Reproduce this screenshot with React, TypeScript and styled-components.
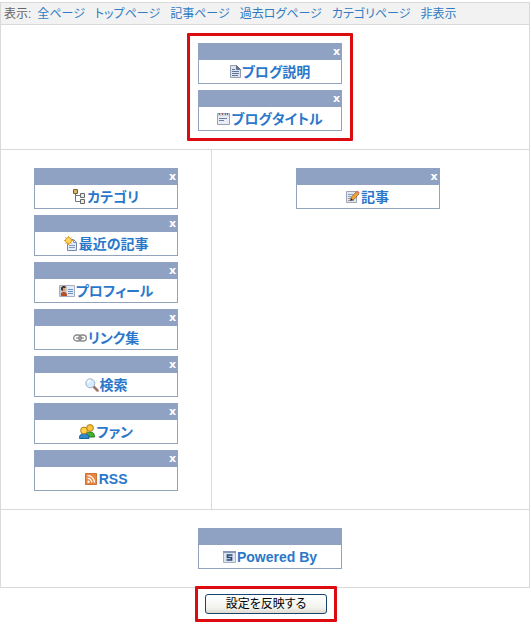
import React from "react";
import styled, { createGlobalStyle } from "styled-components";

const GlobalStyle = createGlobalStyle`
  body {
    margin: 0;
    background: #fff;
    font-family: "Liberation Sans", "Noto Sans CJK JP", sans-serif;
    font-feature-settings: "palt";
    color: #666;
  }
`;

const Page = styled.main`
  padding: 2px 1px 0 0;
`;

const Board = styled.div`
  border: 1px solid #d9d9d9;
`;

const Toolbar = styled.nav`
  display: flex;
  height: 21px;
  padding-left: 3px;
  align-items: center;
  gap: 10px;
  background: #f2f2f2;
  border-bottom: 1px solid #d9d9d9;
  font-size: 12px;
  line-height: 18px;
  white-space: nowrap;
`;

const ToolbarLabel = styled.span`
  margin-right: -4px;
`;

const ToolbarLink = styled.a`
  color: #2f7cc4;
  text-decoration: none;
`;

const HeaderArea = styled.section`
  display: flex;
  justify-content: center;
  padding: 8px 0 8px 10px;
  border-bottom: 1px solid #d9d9d9;
`;

const Columns = styled.div`
  display: grid;
  grid-template-columns: 2fr 3fr;
  border-bottom: 1px solid #d9d9d9;
`;

const Column = styled.section<{ $divided?: boolean }>`
  display: flex;
  flex-direction: column;
  align-items: center;
  gap: 6px;
  padding: ${(p) => (p.$divided ? "18px 0" : "18px 6px 18px 0")};
  border-right: ${(p) => (p.$divided ? "1px solid #d9d9d9" : "0")};
`;

const FooterArea = styled.section`
  display: flex;
  justify-content: center;
  padding: 18px 0 18px 10px;
`;

const Highlight = styled.div<{ $pad: string }>`
  display: flex;
  flex-direction: column;
  gap: 6px;
  padding: ${(p) => p.$pad};
  border: 3px solid #db0b10;
  border-radius: 1px;
`;

const Part = styled.article`
  box-sizing: border-box;
  width: 144px;
  border: 1px solid #92a3bc;
  border-top: 0;
  background: #fff;
`;

const PartBar = styled.header`
  display: flex;
  justify-content: flex-end;
  height: 17px;
  margin: 0 -1px;
  padding-right: 2px;
  background: #8fa2c4;
`;

const CloseButton = styled.button`
  padding: 0;
  border: 0;
  background: none;
  color: #fff;
  font: bold 11px/17px "DejaVu Sans", sans-serif;
  cursor: pointer;
`;

const PartBody = styled.a`
  display: flex;
  align-items: center;
  justify-content: center;
  height: 23px;
  color: #2b78cb;
  font-size: 14px;
  font-weight: bold;
  line-height: 22px;
  text-decoration: none;
  white-space: nowrap;
`;

const Icon = styled.svg`
  display: block;
  flex: none;
  margin-right: 1px;
`;

const SubmitRow = styled.div`
  display: flex;
  justify-content: center;
  margin-top: -2px;
  padding-left: 2px;
`;

const SubmitButton = styled.button`
  width: 122px;
  height: 20px;
  padding: 0;
  border: 1px solid #17436e;
  border-radius: 3px;
  background: linear-gradient(#fff, #f3f3ee 70%, #dedbd0);
  color: #000;
  font: 12px/16px "Liberation Sans", "Noto Sans CJK JP", sans-serif;
  font-feature-settings: "palt";
`;

const icons = {
  description: (
    <Icon width="11" height="13" viewBox="0 0 11 13" aria-hidden="true">
      <path d="M.5.5h6l4 4v8H.5z" fill="#dde3ec" stroke="#949eb0" />
      <path d="M6.5.5v4h4z" fill="#5f6f8c" stroke="#62718c" />
      <path d="M2 4.500h3M2 6.500h7M2 8.500h7M2 10.500h6" stroke="#62759b" />
    </Icon>
  ),
  title: (
    <Icon width="13" height="13" viewBox="0 0 13 13" aria-hidden="true">
      <path d="M.5 1.500h12v11H.5z" fill="#e8ecf4" stroke="#98a2b5" />
      <path d="M1 2h11v2H1z" fill="#cbd3e2" />
      <path d="M2 2h1M5 2h1M8 2h1M10 2h1" stroke="#b25a53" strokeWidth="2" />
      <path d="M2 6.500h8M2 8.500h5" stroke="#6b7fa5" />
    </Icon>
  ),
  category: (
    <Icon width="13" height="15" viewBox="0 0 13 15" aria-hidden="true">
      <path d="M2.5 5v7.5H7M2.500 6.500H7" fill="none" stroke="#777" />
      <path d="M.5.5h4v4h-4z" fill="#d9b65d" stroke="#7d6226" />
      <path d="M7.5 4.500h4v4h-4zM7.500 10.500h4v4h-4z" fill="#e9e9e9" stroke="#686868" />
    </Icon>
  ),
  recent: (
    <Icon width="14" height="15" viewBox="0 0 14 15" aria-hidden="true">
      <path d="M3.500 3.500h6l3 3v8h-9z" fill="#e3ecf8" stroke="#7189ad" />
      <path d="M9.500 3.500v3h3M5 9.500h6M5 11.500h6" fill="none" stroke="#8099be" />
      <path d="M4.500 0v9M0 4.500h9M1.500 1.500l6 6M7.500 1.500l-6 6" stroke="#e6a22e" />
      <circle cx="4.500" cy="4.500" r="3" fill="#ffd75c" stroke="#dc972b" />
    </Icon>
  ),
  profile: (
    <Icon width="16" height="12" viewBox="0 0 16 12" aria-hidden="true">
      <path d="M.5.5h15v11H.5z" fill="#e3ebf7" stroke="#a3aec1" />
      <path d="M1 1h7v10H1z" fill="#c6ccd7" />
      <path d="M2 11V8l2-1h2l2 2v2z" fill="#b94e25" />
      <circle cx="4.500" cy="4.500" r="2" fill="#dba26f" />
      <path d="M2 5V2.500L4 1h2l1 2H4v3z" fill="#4c3429" />
      <path d="M9 4.500h5M9 6.500h5M9 8.500h5" stroke="#7192c1" />
    </Icon>
  ),
  links: (
    <Icon width="14" height="8" viewBox="0 0 14 8" aria-hidden="true">
      <rect x=".7" y="1" width="7.500" height="6" rx="3" fill="none" stroke="#888" strokeWidth="1.300" />
      <rect x="5.800" y="1" width="7.500" height="6" rx="3" fill="none" stroke="#888" strokeWidth="1.300" />
      <path d="M3 4h8" stroke="#777" />
    </Icon>
  ),
  search: (
    <Icon width="14" height="14" viewBox="0 0 14 14" aria-hidden="true">
      <path d="M8.500 8.500l4 4" stroke="#9a7467" strokeWidth="2.500" strokeLinecap="round" />
      <circle cx="5.300" cy="5.300" r="4.500" fill="#d6ebfb" stroke="#9db3d1" />
      <path d="M3 5c0-1.500 1-2.500 2.500-2.500" fill="none" stroke="#fff" strokeWidth="1.500" />
    </Icon>
  ),
  fans: (
    <Icon width="16" height="15" viewBox="0 0 16 15" aria-hidden="true">
      <path d="M7 13c0-4 1.500-5 4-5s4.500 1 4.500 5z" fill="#45ad34" stroke="#217d25" />
      <circle cx="11" cy="4" r="3.400" fill="#f8c63f" stroke="#b37c18" />
      <path d="M.5 14.500c0-4 2-5 4.500-5s5 1 5 5z" fill="#3089ce" stroke="#15639f" />
      <circle cx="5" cy="6.500" r="3.400" fill="#ffd34d" stroke="#b37c18" />
    </Icon>
  ),
  rss: (
    <Icon width="13" height="12" viewBox="0 0 13 12" aria-hidden="true">
      <rect width="12" height="12" rx="1" fill="#e88542" />
      <path d="M.5.5h11v11H.5z" fill="none" stroke="#d0733a" />
      <circle cx="3.500" cy="8.700" r="1.200" fill="#fff" />
      <path d="M2.500 5.300a4.300 4.300 0 0 1 4.300 4.300M2.500 2.600a7 7 0 0 1 7 7" fill="none" stroke="#fff" strokeWidth="1.300" />
    </Icon>
  ),
  article: (
    <Icon width="14" height="13" viewBox="0 0 14 13" aria-hidden="true">
      <path d="M.5 1.500h10v11H.5z" fill="#e3e8f0" stroke="#9aa4b5" />
      <path d="M2 4.500h5M2 6.500h3M2 8.500h3M2 10.500h6" stroke="#8a9cb9" />
      <path d="M4.500 10.500l1-3.500 5-5.500 2.500 2.300-5 5.500z" fill="#f0a531" stroke="#9d5d20" strokeWidth=".8" />
      <path d="M10 2l1.500-1.500L13.500 2.500 12.500 4z" fill="#db7772" />
      <path d="M4.300 10.800l.8-2.500 1.600 1.500z" fill="#33281f" />
    </Icon>
  ),
  powered: (
    <Icon width="13" height="12" viewBox="0 0 13 12" aria-hidden="true">
      <path d="M.5.5h12v11H.5z" fill="#dce4f0" stroke="#a4b1c7" />
      <path d="M0 0h13v2H0z" fill="#8798b8" />
      <path d="M9.500 4h-5v2.500h4V9h-5" fill="none" stroke="#264878" strokeWidth="1.700" />
    </Icon>
  ),
};

type PartItem = { icon: keyof typeof icons; label: string; fixed?: boolean };

const headerParts: PartItem[] = [
  { icon: "description", label: "ブログ説明" },
  { icon: "title", label: "ブログタイトル" },
];

const sideParts: PartItem[] = [
  { icon: "category", label: "カテゴリ" },
  { icon: "recent", label: "最近の記事" },
  { icon: "profile", label: "プロフィール" },
  { icon: "links", label: "リンク集" },
  { icon: "search", label: "検索" },
  { icon: "fans", label: "ファン" },
  { icon: "rss", label: "RSS" },
];

const pages = ["全ページ", "トップページ", "記事ページ", "過去ログページ", "カテゴリページ", "非表示"];

function BlogPart({ icon, label, fixed }: PartItem) {
  return (
    <Part>
      <PartBar>{!fixed && <CloseButton type="button">x</CloseButton>}</PartBar>
      <PartBody href="#">
        {icons[icon]}
        {label}
      </PartBody>
    </Part>
  );
}

export default function App() {
  return (
    <Page>
      <GlobalStyle />
      <Board>
        <Toolbar>
          <ToolbarLabel>表示:</ToolbarLabel>
          {pages.map((name) => (
            <ToolbarLink href="#" key={name}>{name}</ToolbarLink>
          ))}
        </Toolbar>
        <HeaderArea>
          <Highlight $pad="7px 8px">
            {headerParts.map((part) => <BlogPart key={part.label} {...part} />)}
          </Highlight>
        </HeaderArea>
        <Columns>
          <Column $divided>
            {sideParts.map((part) => <BlogPart key={part.label} {...part} />)}
          </Column>
          <Column>
            <BlogPart icon="article" label="記事" />
          </Column>
        </Columns>
        <FooterArea>
          <BlogPart icon="powered" label="Powered By" fixed />
        </FooterArea>
      </Board>
      <SubmitRow>
        <Highlight $pad="5px 7px">
          <SubmitButton type="button">設定を反映する</SubmitButton>
        </Highlight>
      </SubmitRow>
    </Page>
  );
}
